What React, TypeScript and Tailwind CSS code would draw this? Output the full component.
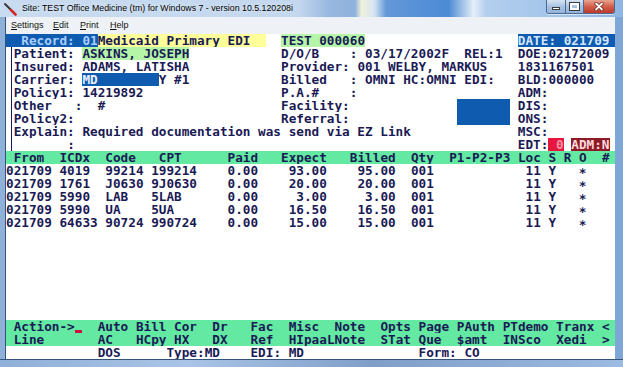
import React from 'react';

type Seg = { c: number; t: string; k?: string };

const COLS = 80;

const BLUE = 'bg-[#0f5bb0]';
const VLINE = 'bg-[linear-gradient(90deg,transparent_5px,#1a1a55_5px,#1a1a55_6px,transparent_6px)]';

// a terminal line: segments sit at fixed columns, the gaps are spaces
function Row({ segs = [], className = '' }: { segs?: Seg[]; className?: string }) {
  const out: React.ReactNode[] = [];
  let pos = 0;
  segs.forEach((s, i) => {
    if (s.c > pos) out.push(<span key={'g' + i}>{' '.repeat(s.c - pos)}</span>);
    out.push(
      <span key={i} className={`inline-block h-[13px] align-top ${s.k ?? ''}`}>
        {s.t}
      </span>
    );
    pos = s.c + s.t.length;
  });
  if (pos < COLS) out.push(<span key="end">{' '.repeat(COLS - pos)}</span>);
  return <div className={`h-[13px] leading-[13px] whitespace-pre overflow-hidden ${className}`}>{out}</div>;
}

const v: Seg = { c: 0, t: ' ', k: VLINE };

const dataRow = (icd: string, code: string, cpt: string, exp: string, billed: string): Seg[] => [
  { c: 0, t: '021709' },
  { c: 7, t: icd },
  { c: 13, t: code },
  { c: 19, t: cpt },
  { c: 29, t: '0.00' },
  { c: 42 - exp.length, t: exp },
  { c: 51 - billed.length, t: billed },
  { c: 53, t: '001' },
  { c: 68, t: '11' },
  { c: 71, t: 'Y' },
  { c: 75, t: '∗' },
];

const rows: { segs?: Seg[]; className?: string }[] = [
  {
    segs: [
      { c: 0, t: '  Record: 01', k: `${BLUE} text-[#a9d0ff]` },
      { c: 12, t: 'Medicaid Primary EDI  ', k: 'bg-[#ffff99]' },
      { c: 36, t: 'TEST 000060', k: 'bg-[#b4f5a8]' },
      { c: 67, t: 'DATE: 021709 ', k: `${BLUE} text-[#d4e6ff]` },
    ],
  },
  {
    segs: [
      v,
      { c: 1, t: 'Patient:' },
      { c: 10, t: 'ASKINS, JOSEPH', k: 'bg-[#b4f5a8]' },
      { c: 36, t: 'D/O/B    : 03/17/2002F  REL:1' },
      { c: 67, t: 'DOE:02172009' },
    ],
  },
  {
    segs: [
      v,
      { c: 1, t: 'Insured: ADAMS, LATISHA' },
      { c: 36, t: 'Provider: 001 WELBY, MARKUS' },
      { c: 67, t: '1831167501' },
    ],
  },
  {
    segs: [
      v,
      { c: 1, t: 'Carrier:' },
      { c: 10, t: 'MD        ', k: `${BLUE} text-[#e8f0ff]` },
      { c: 20, t: 'Y #1' },
      { c: 36, t: 'Billed   : OMNI HC:OMNI EDI:' },
      { c: 67, t: 'BLD:000000' },
    ],
  },
  {
    segs: [v, { c: 1, t: 'Policy1: 14219892' }, { c: 36, t: 'P.A.#    :' }, { c: 67, t: 'ADM:' }],
  },
  {
    segs: [
      v,
      { c: 1, t: 'Other   :' },
      { c: 12, t: '#' },
      { c: 36, t: 'Facility:' },
      { c: 59, t: '       ', k: BLUE },
      { c: 67, t: 'DIS:' },
    ],
  },
  {
    segs: [v, { c: 1, t: 'Policy2:' }, { c: 36, t: 'Referral:' }, { c: 59, t: '       ', k: BLUE }, { c: 67, t: 'ONS:' }],
  },
  {
    segs: [v, { c: 1, t: 'Explain: Required documentation was send via EZ Link' }, { c: 67, t: 'MSC:' }],
  },
  {
    segs: [
      v,
      { c: 8, t: ':' },
      { c: 67, t: 'EDT:' },
      { c: 71, t: ' 0', k: 'bg-[#e5173f] text-[#ff8fa6]' },
      { c: 74, t: 'ADM:N', k: 'bg-[#8c1b27] text-[#ffd9dc]' },
    ],
  },
  {
    className: 'bg-[#63e9a2]',
    segs: [
      { c: 1, t: 'From' },
      { c: 7, t: 'ICDx' },
      { c: 13, t: 'Code' },
      { c: 20, t: 'CPT' },
      { c: 29, t: 'Paid' },
      { c: 36, t: 'Expect' },
      { c: 45, t: 'Billed' },
      { c: 53, t: 'Qty' },
      { c: 58, t: 'P1-P2-P3' },
      { c: 67, t: 'Loc' },
      { c: 71, t: 'S' },
      { c: 73, t: 'R' },
      { c: 75, t: 'O' },
      { c: 78, t: '#' },
    ],
  },
  { segs: dataRow('4019', '99214', '199214', '93.00', '95.00') },
  { segs: dataRow('1761', 'J0630', '9J0630', '20.00', '20.00') },
  { segs: dataRow('5990', 'LAB', '5LAB', '3.00', '3.00') },
  { segs: dataRow('5990', 'UA', '5UA', '16.50', '16.50') },
  { segs: dataRow('64633', '90724', '990724', '15.00', '15.00') },
  {},
  {},
  {},
  {},
  {},
  {},
  {},
  {
    className: 'bg-[#63e9a2]',
    segs: [
      { c: 1, t: 'Action->' },
      { c: 9, t: ' ', k: 'shadow-[inset_0_-3px_0_#d11141]' },
      { c: 12, t: 'Auto' },
      { c: 17, t: 'Bill' },
      { c: 22, t: 'Cor' },
      { c: 27, t: 'Dr' },
      { c: 32, t: 'Fac' },
      { c: 37, t: 'Misc' },
      { c: 43, t: 'Note' },
      { c: 49, t: 'Opts' },
      { c: 54, t: 'Page' },
      { c: 59, t: 'PAuth' },
      { c: 65, t: 'PTdemo' },
      { c: 72, t: 'Tranx' },
      { c: 78, t: '<' },
    ],
  },
  {
    className: 'bg-[#63e9a2]',
    segs: [
      { c: 1, t: 'Line' },
      { c: 12, t: 'AC' },
      { c: 17, t: 'HCpy' },
      { c: 22, t: 'HX' },
      { c: 27, t: 'DX' },
      { c: 32, t: 'Ref' },
      { c: 37, t: 'HIpaa' },
      { c: 42, t: 'LNote' },
      { c: 49, t: 'STat' },
      { c: 54, t: 'Que' },
      { c: 59, t: '$amt' },
      { c: 65, t: 'INSco' },
      { c: 72, t: 'Xedi' },
      { c: 78, t: '>' },
    ],
  },
  {
    segs: [{ c: 12, t: 'DOS' }, { c: 21, t: 'Type:MD' }, { c: 32, t: 'EDI: MD' }, { c: 54, t: 'Form: CO' }],
  },
];

function AppIcon() {
  return (
    <svg width="14" height="14" viewBox="0 0 14 14">
      <line x1="2" y1="2" x2="8" y2="8" stroke="#3a3a3a" strokeWidth="2" strokeLinecap="round" />
      <line x1="8" y1="8" x2="12.5" y2="12.5" stroke="#d42a2a" strokeWidth="2.6" strokeLinecap="round" />
    </svg>
  );
}

function CaptionButtons() {
  return (
    <div className="flex h-[14px] rounded-b-[3px] border border-t-0 border-[#4a6a92] overflow-hidden shadow-[0_1px_0_rgba(255,255,255,0.6)]">
      <div className="w-[19px] flex items-center justify-center bg-[linear-gradient(#d6e4f4,#a9c2e2_50%,#94b2da)] border-r border-[#4a6a92]">
        <div className="w-[8px] h-[3px] bg-white border border-[#3b3b3b] mt-[4px]" />
      </div>
      <div className="w-[18px] flex items-center justify-center bg-[linear-gradient(#d6e4f4,#a9c2e2_50%,#94b2da)] border-r border-[#4a6a92]">
        <div className="w-[9px] h-[7px] border-2 border-white outline outline-1 outline-[#3b3b3b]" />
      </div>
      <div className="w-[30px] flex items-center justify-center bg-[linear-gradient(#e8a493,#d2604a_50%,#c0392b)]">
        <svg width="10" height="9" viewBox="0 0 10 9">
          <path d="M2 1.5 L8 7.5 M8 1.5 L2 7.5" stroke="#6a2418" strokeWidth="3.2" strokeLinecap="round" />
          <path d="M2 1.5 L8 7.5 M8 1.5 L2 7.5" stroke="#ffffff" strokeWidth="1.8" strokeLinecap="round" />
        </svg>
      </div>
    </div>
  );
}

export default function App() {
  return (
    <div className="w-[623px] h-[367px] flex flex-col overflow-hidden bg-[linear-gradient(90deg,#8fb0d8,#a7c3e6_50%,#7ea6d6)]">
      {/* title bar */}
      <div className="h-[17px] flex items-start pl-[2px] pr-[8px] bg-[linear-gradient(90deg,#c8dbf0_0%,#c3d7ef_48%,#96b7df_53%,#8eb2dd_57%,#eef0d8_58%,#d9e6f3_60%,#6398d8_62%,#4b8ad5_72%,#e4eef9_76%,#b3cfee_78%,#a4c5ea_88%,#8fb5e3_100%)]">
        <div className="pt-[2px] pl-[1px]">
          <AppIcon />
        </div>
        <div className="ml-[5px] pt-[3px] text-[8.8px] leading-[11px] text-black font-['Liberation_Sans',Arial,sans-serif] [text-shadow:0_0_4px_rgba(255,255,255,0.9)]">
          Site: TEST Office Medicine (tm) for Windows 7 - version 10.5.120208i
        </div>
        <div className="flex-1" />
        <CaptionButtons />
      </div>

      <div className="flex-1 flex pl-[5px] pr-[8px]">
        <div className="flex flex-col w-[610px] border-l border-[#34547c]">
          {/* menu bar */}
          <div className="h-[17px] flex items-center pl-[5px] bg-[#eef1f6] text-[9px] text-[#111] font-['Liberation_Sans',Arial,sans-serif]">
            <span className="w-[42px]"><u>S</u>ettings</span>
            <span className="w-[27px]"><u>E</u>dit</span>
            <span className="w-[30px]"><u>P</u>rint</span>
            <span><u>H</u>elp</span>
          </div>
          {/* terminal screen */}
          <div className="w-[609px] overflow-hidden bg-white text-[#1a1a55] text-[12.69px] font-bold font-['DejaVu_Sans_Mono',monospace]">
            {rows.map((r, i) => (
              <Row key={i} segs={r.segs} className={r.className} />
            ))}
          </div>
        </div>
      </div>

      {/* bottom frame */}
      <div className="h-[8px] bg-[linear-gradient(90deg,#8fb0d8,#a9c4e6_30%,#7f9fc9_60%,#9cbbe2)] border-t border-[#34547c]" />
    </div>
  );
}
